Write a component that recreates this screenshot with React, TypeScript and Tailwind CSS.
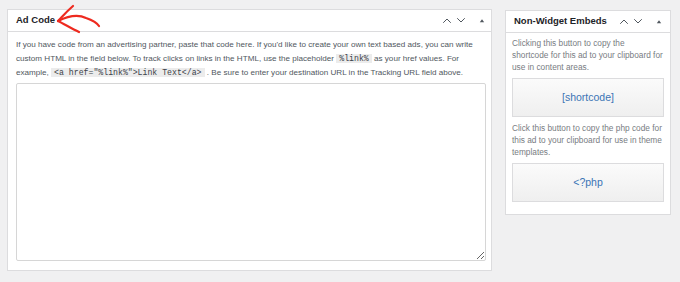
import React from 'react'

const sans = "font-['Liberation_Sans','Arimo',sans-serif]"

function Chevron({ up }: { up?: boolean }) {
  return (
    <svg width="10" height="7" viewBox="0 0 10 7" fill="none" stroke="#50575e" strokeWidth="1" strokeLinecap="round" strokeLinejoin="round">
      {up ? <polyline points="1.5,5.5 5,2 8.5,5.5" /> : <polyline points="1.5,1.5 5,5 8.5,1.5" />}
    </svg>
  )
}

function Toggle() {
  return (
    <svg width="6" height="5" viewBox="0 0 6 5">
      <polygon points="0.8,4.3 3,1.2 5.2,4.3" fill="#50575e" />
    </svg>
  )
}

function PanelHeader({ title, pr }: { title: string; pr: string }) {
  return (
    <div className={`flex h-[22px] items-center justify-between border-b border-[#dcdcde] pl-[8px] ${pr}`}>
      <span className="text-[9.5px] font-bold text-[#1d2327]">{title}</span>
      <div className="flex items-center gap-[4px]">
        <Chevron up />
        <Chevron />
        <span className="ml-[9px]"><Toggle /></span>
      </div>
    </div>
  )
}

function Code({ children }: { children: React.ReactNode }) {
  return (
    <code className="bg-[#ececec] px-[3px] font-['Liberation_Mono','DejaVu_Sans_Mono',monospace] text-[8.2px] text-[#3c434a]">
      {children}
    </code>
  )
}

function CopyButton({ label }: { label: string }) {
  return (
    <button className="flex h-[39px] w-full items-center justify-center border border-[#dcdcde] bg-gradient-to-b from-[#fbfbfb] to-[#efefef] text-[10.5px] text-[#3b74b5]">
      {label}
    </button>
  )
}

export default function App() {
  return (
    <div className={`flex h-[282px] w-[680px] items-start gap-[13px] bg-[#f0f0f1] pl-[7px] pt-[9px] ${sans}`}>
      {/* Ad Code panel */}
      <div className="relative h-[262px] w-[485px] border border-[#dcdcde] bg-white">
        <PanelHeader title="Ad Code" pr="pr-[6px]" />
        <svg className="absolute left-0 top-0 overflow-visible" width="110" height="40" viewBox="0 0 110 40" fill="none" stroke="#ee2a1f" strokeWidth="2.2" strokeLinecap="round" strokeLinejoin="round">
          <path d="M50,11 C60,6 70,4 78,8 C84,10 89,13 91,16" />
          <path d="M65,-4 C58,2 54,7 50,11 C56,14 63,18 71,22" />
        </svg>
        <div className="px-[8px] pt-[6px]">
          <p className="whitespace-nowrap text-[8.1px] leading-[14px] text-[#50575e]">
            If you have code from an advertising partner, paste that code here. If you'd like to create your own text based ads, you can write
            <br />
            custom HTML in the field below. To track clicks on links in the HTML, use the placeholder <Code>%link%</Code> as your href values. For
            <br />
            example, <Code>&lt;a href="%link%"&gt;Link Text&lt;/a&gt;</Code> . Be sure to enter your destination URL in the Tracking URL field above.
          </p>
          <textarea className="mt-[3px] block h-[178px] w-[470px] resize-y rounded-[2px] border border-[#d6d6d6] bg-white" />
        </div>
      </div>

      {/* Non-Widget Embeds panel */}
      <div className="mt-[1px] w-[166px] border border-[#dcdcde] bg-white">
        <PanelHeader title="Non-Widget Embeds" pr="pr-[8px]" />
        <div className="px-[6px] pb-[12px] pt-[4px]">
          <p className="whitespace-nowrap text-[8.3px] leading-[12px] text-[#787c82]">
            Clicking this button to copy the
            <br />
            shortcode for this ad to your clipboard for
            <br />
            use in content areas.
          </p>
          <div className="mt-[5px]">
            <CopyButton label="[shortcode]" />
          </div>
          <p className="mt-[5px] whitespace-nowrap text-[8.3px] leading-[12px] text-[#787c82]">
            Click this button to copy the php code for
            <br />
            this ad to your clipboard for use in theme
            <br />
            templates.
          </p>
          <div className="mt-[5px]">
            <CopyButton label="<?php" />
          </div>
        </div>
      </div>
    </div>
  )
}
